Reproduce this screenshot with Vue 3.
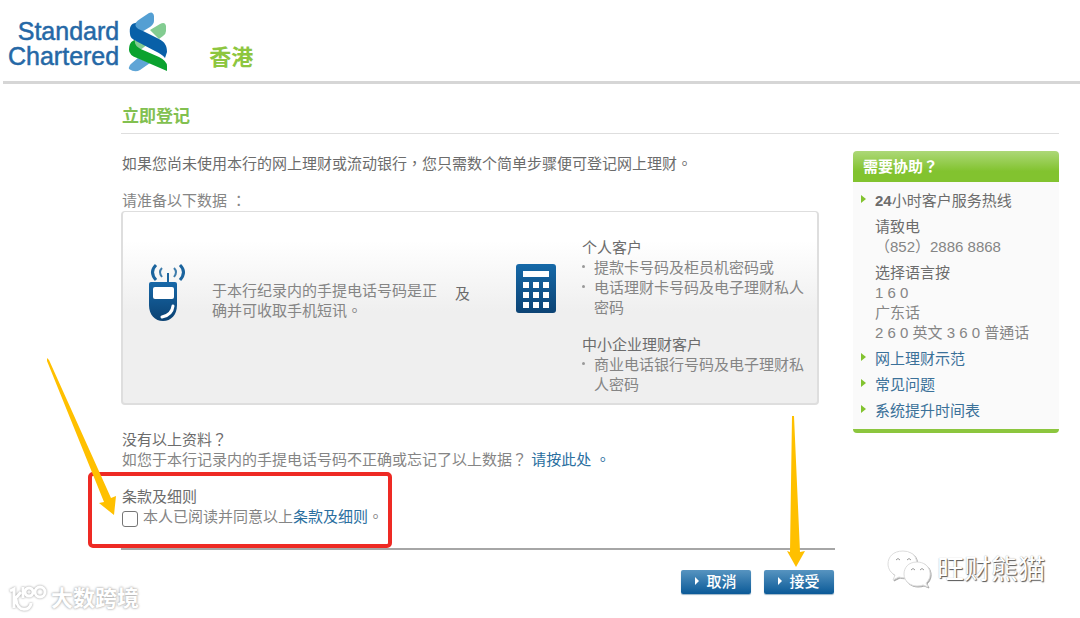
<script setup>
import { ref } from 'vue'

const agreed = ref(false)
const guides = ['网上理财示范', '常见问题', '系统提升时间表']
const keys = [0, 1, 2].flatMap((r) => [0, 1, 2].map((c) => ({ x: 8 + c * 10, y: 19 + r * 10 })))
</script>

<template>
  <div class="page" lang="zh-Hant">
    <header class="masthead">
      <a class="logo" href="#">
        <span class="logo-name">Standard<br />Chartered</span>
        <svg class="logo-mark" viewBox="0 0 40 60" aria-hidden="true">
          <path d="M5 14C7 11 9 9 12 7L21 1Q25 -1 26 4V9Q26 12 22 15L12 21Q7 24 5 14Z" fill="#549fd3" />
          <path d="M22 18L32 12Q37 9 38 14V19Q38 22 35 24L31 27Z" fill="#83cc91" />
          <path d="M5 31L9 27L20 32L11 39Z" fill="#83cc91" />
          <path d="M1 57Q0 54 4 51L10 46L22 51L12 58Q7 61 1 57Z" fill="#5fa5d6" />
          <path d="M2 22C1 15 3 11 8 11C6 15 10 17 15 19L31 27C37 30 39 34 39 40L37 46C35 43 31 41 27 39L8 29C4 27 2 25 2 22Z" fill="#0860a8" />
          <path d="M1 38C1 32 3 29 7 28C6 33 10 36 15 38L31 45Q39 49 39 54V59L9 46Q1 43 1 38Z" fill="#0ba22f" />
        </svg>
      </a>
      <span class="region">香港</span>
    </header>

    <main class="content">
      <h1>立即登记</h1>
      <div class="columns">
        <section class="register">
          <p class="intro">如果您尚未使用本行的网上理财或流动银行，您只需数个简单步骤便可登记网上理财。</p>
          <p>请准备以下数据 ：</p>
          <div class="panel">
            <svg class="phone" viewBox="0 0 38 60" aria-hidden="true">
              <defs>
                <linearGradient id="phoneFill" x1="0" y1="0" x2="0" y2="1">
                  <stop offset="0" stop-color="#1768a8" />
                  <stop offset="1" stop-color="#0b4273" />
                </linearGradient>
              </defs>
              <path d="M8 2Q1 9 8 17M32 2Q39 9 32 17" fill="none" stroke="#1b649e" stroke-width="3" />
              <path d="M14 5Q10 9 14 14M26 5Q30 9 26 14" fill="none" stroke="#3e7cab" stroke-width="2" />
              <path d="M20 10V20" stroke="#1b649e" stroke-width="2" />
              <path d="M1 21Q1 19 3 19H27Q29 19 29 21V42C29 52 23 58 15 58C7 58 1 52 1 42Z" fill="url(#phoneFill)" />
              <rect x="5" y="24" width="21" height="12" rx="2" fill="#fff" />
              <path d="M25 43Q24 52 14 54" fill="none" stroke="#fff" stroke-width="3" stroke-linecap="round" />
            </svg>
            <p class="mobile">于本行纪录内的手提电话号码是正确并可收取手机短讯。</p>
            <span class="and">及</span>
            <svg class="calculator" viewBox="0 0 42 51" aria-hidden="true">
              <defs>
                <linearGradient id="calcFill" x1="0" y1="0" x2="0" y2="1">
                  <stop offset="0" stop-color="#1669a8" />
                  <stop offset="1" stop-color="#0c4374" />
                </linearGradient>
              </defs>
              <rect x="1" y="1" width="40" height="49" rx="3" fill="url(#calcFill)" />
              <rect x="8" y="8" width="26" height="6" fill="#fff" />
              <rect v-for="k in keys" :key="`${k.x}-${k.y}`" :x="k.x" :y="k.y" width="6" height="6" fill="#fff" />
            </svg>
            <div class="customers">
              <h2>个人客户</h2>
              <ul>
                <li>提款卡号码及柜员机密码或</li>
                <li>电话理财卡号码及电子理财私人密码</li>
              </ul>
              <h2>中小企业理财客户</h2>
              <ul>
                <li>商业电话银行号码及电子理财私人密码</li>
              </ul>
            </div>
          </div>

          <h2>没有以上资料？</h2>
          <p>如您于本行记录内的手提电话号码不正确或忘记了以上数据？ <a class="strong" href="#">请按此处 。</a></p>

          <div class="terms">
            <h2>条款及细则</h2>
            <div class="agree">
              <input id="agree" v-model="agreed" type="checkbox" />
              <label for="agree">本人已阅读并同意以上<a class="strong" href="#">条款及细则</a>。</label>
            </div>
            <div class="highlight"></div>
            <svg class="arrow-terms" viewBox="0 0 70 158" aria-hidden="true">
              <path d="M0 0L2 2L64 140L69 138L67 157L52 145L57 144L0 3Z" fill="#ffc000" />
            </svg>
          </div>

          <div class="actions">
            <button type="button">取消</button>
            <button type="button">接受
              <svg class="arrow-accept" viewBox="0 0 18 151" aria-hidden="true">
                <path d="M5 0H7L13 136L18 135L9 151L0 135L3 136Z" fill="#ffc000" />
              </svg>
            </button>
          </div>
        </section>

        <aside class="help">
          <h2>需要协助？</h2>
          <div class="help-body">
            <div class="entry">
              <h3><b>24</b>小时客户服务热线</h3>
              <h4>请致电</h4>
              <p>（852）2886 8868</p>
              <h4>选择语言按</h4>
              <p>1 6 0<br />广东话<br />2 6 0 英文 3 6 0 普通话</p>
            </div>
            <div v-for="g in guides" :key="g" class="entry"><a href="#">{{ g }}</a></div>
          </div>
        </aside>
      </div>
    </main>

    <div class="mark-left">
      <svg viewBox="0 0 40 30" aria-hidden="true">
        <path d="M2 7L6 5V24M13 8L7 15M8 15C9 29 23 27 23 19" />
        <circle cx="21" cy="8" r="4" />
        <circle cx="32" cy="8" r="5" />
        <path d="M15 3V14" />
      </svg>
      <span>大数跨境</span>
    </div>
    <div class="mark-right">
      <svg viewBox="0 0 46 42" aria-hidden="true">
        <path d="M17 2C7 2 2 8 2 15C2 20 5 24 9 26L7 31L13 28C16 29 20 29 22 28C32 26 34 8 25 4Q22 2 17 2Z" />
        <path d="M31 13C22 13 18 19 18 25C18 32 24 37 31 37Q35 37 37 36L42 38L40 34C48 27 44 13 31 13Z" />
        <path class="eyes" d="M10 11Q12 8 14 11M21 11Q23 8 25 11M25 21Q27 18 29 21M34 21Q36 18 38 21" />
      </svg>
      <span>旺财熊猫</span>
    </div>
  </div>
</template>

<style>
body {
  margin: 0;
  background: #fff;
}
</style>

<style scoped>
.page {
  position: relative;
  min-height: 100vh;
  box-sizing: border-box;
  overflow: hidden;
  font: 15px/20px "Liberation Sans", "Noto Sans CJK TC", sans-serif;
  color: #858585;
}
h1, h2, h3, h4, p, ul {
  margin: 0;
  padding: 0;
  font-size: 15px;
  font-weight: 400;
}
h2, h3, h4 {
  color: #6c6c6c;
}
a {
  color: #3b7199;
  text-decoration: none;
}
.strong {
  color: #2a6f9f;
}
.masthead {
  display: flex;
  align-items: flex-start;
  gap: 41px;
  height: 84px;
  box-sizing: border-box;
  margin-left: 3px;
  padding: 12px 0 0 5px;
  border-bottom: 3px solid #d6d6d6;
}
.logo {
  display: flex;
  gap: 9px;
}
.logo-name {
  padding-top: 7px;
  text-align: right;
  font-size: 25px;
  line-height: 25px;
  color: #2568a6;
  -webkit-text-stroke: 0.5px #2568a6;
}
.logo-mark {
  width: 40px;
  height: 60px;
}
.region {
  padding-top: 31px;
  font-size: 22px;
  line-height: 30px;
  font-weight: 700;
  color: #8dc63f;
}
.content {
  padding: 21px 21px 0 121px;
}
h1 {
  padding: 0 0 4px 1px;
  border-bottom: 1px solid #dedede;
  font-size: 17px;
  line-height: 24px;
  font-weight: 700;
  color: #82c050;
}
.columns {
  display: grid;
  grid-template-columns: minmax(0, 1fr) 206px;
  align-items: start;
  gap: 18px;
}
.register {
  padding-top: 20px;
}
.register > p,
.register > h2 {
  padding-left: 1px;
}
.register > .intro {
  margin-bottom: 17px;
  color: #6c6c6c;
}
.panel {
  display: flex;
  align-items: flex-start;
  box-sizing: border-box;
  margin: 0 16px 25px 0;
  padding: 26px 13px 8px 25px;
  border: 2px solid #dedede;
  border-top-width: 1px;
  border-radius: 4px;
  background: linear-gradient(#fff, #fff 15%, #efefef 52%, #efefef);
}
.phone {
  flex: none;
  width: 38px;
  height: 60px;
  margin: 25px 26px 0 0;
}
.mobile {
  flex: 1;
  margin-top: 43px;
}
.and {
  margin: 46px 45px 0 16px;
  color: #6c6c6c;
}
.calculator {
  flex: none;
  width: 42px;
  height: 51px;
  margin: 25px 25px 0 0;
}
.customers {
  flex: none;
  width: 222px;
}
.customers ul + h2 {
  margin-top: 17px;
}
ul {
  list-style: none;
}
li {
  position: relative;
  padding-left: 12px;
}
li::before {
  content: "";
  position: absolute;
  left: 0;
  top: 7px;
  width: 3px;
  height: 3px;
  border-radius: 50%;
  background: #999;
}
.terms {
  position: relative;
  margin-top: 17px;
  padding: 0 0 21px 1px;
  border-bottom: 2px solid #a6a6a6;
}
.agree {
  display: flex;
  align-items: center;
}
.agree input {
  appearance: none;
  width: 16px;
  height: 16px;
  box-sizing: border-box;
  margin: 3px 5px 0 0;
  border: 1px solid #767676;
  border-radius: 3px;
  background: #fff;
}
.agree input:checked {
  background: #0b5fa0;
}
.highlight {
  position: absolute;
  left: -33px;
  top: -15px;
  width: 296px;
  height: 68px;
  border: 4px solid #ee2a24;
  border-radius: 5px;
  pointer-events: none;
}
.arrow-terms {
  position: absolute;
  left: -74px;
  top: -129px;
  width: 70px;
  height: 158px;
  pointer-events: none;
}
.actions {
  display: flex;
  justify-content: flex-end;
  gap: 13px;
  padding: 20px 1px 24px 0;
}
button {
  position: relative;
  width: 70px;
  height: 24px;
  padding: 0 0 0 11px;
  border: 0;
  border-radius: 2px;
  background: linear-gradient(#5794c0, #0b5a98);
  box-shadow: 0 1px 1px #9db5c7;
  color: #fff;
  font: 500 15px/24px "Liberation Sans", "Noto Sans CJK TC", sans-serif;
}
button::before {
  content: "";
  position: absolute;
  left: 14px;
  top: 7px;
  border-left: 4px solid #fff;
  border-top: 4px solid transparent;
  border-bottom: 4px solid transparent;
}
.arrow-accept {
  position: absolute;
  left: 23px;
  bottom: 27px;
  width: 18px;
  height: 151px;
  pointer-events: none;
}
.help {
  margin-top: 17px;
  border-bottom: 4px solid #8cc63e;
  border-radius: 4px;
  background: #fafafa;
}
.help > h2 {
  padding-left: 10px;
  border-radius: 4px 4px 0 0;
  background: linear-gradient(#add878, #82c32f 65%);
  line-height: 31px;
  font-weight: 700;
  color: #fff;
}
.help-body {
  display: flex;
  flex-direction: column;
  gap: 6px;
  padding: 9px 4px 8px 22px;
}
.entry {
  position: relative;
}
.entry::before {
  content: "";
  position: absolute;
  left: -14px;
  top: 4px;
  border-left: 5px solid #82c32f;
  border-top: 4px solid transparent;
  border-bottom: 4px solid transparent;
}
.entry h4 {
  margin-top: 6px;
}
.mark-left,
.mark-right {
  position: absolute;
  display: flex;
  align-items: center;
  color: #fff;
  pointer-events: none;
}
.mark-left {
  left: 8px;
  bottom: 4px;
  gap: 3px;
  font-size: 22px;
  line-height: 30px;
  font-weight: 700;
  text-shadow: 0 0 2px #aaa, 0 0 3px #bbb;
}
.mark-left svg {
  width: 40px;
  height: 30px;
  fill: none;
  stroke: #fff;
  stroke-width: 3;
  filter: drop-shadow(0 0 1px #999);
}
.mark-right {
  right: 35px;
  bottom: 27px;
  gap: 5px;
  font-size: 27px;
  line-height: 40px;
  text-shadow: 1px 1px 1px #555, 0 0 1px #aaa;
}
.mark-right svg {
  width: 46px;
  height: 42px;
  fill: #fff;
  stroke: #ddd;
  stroke-width: 1;
  filter: drop-shadow(1px 1px 0 #aaa);
}
.mark-right .eyes {
  fill: none;
  stroke: #999;
}
</style>
